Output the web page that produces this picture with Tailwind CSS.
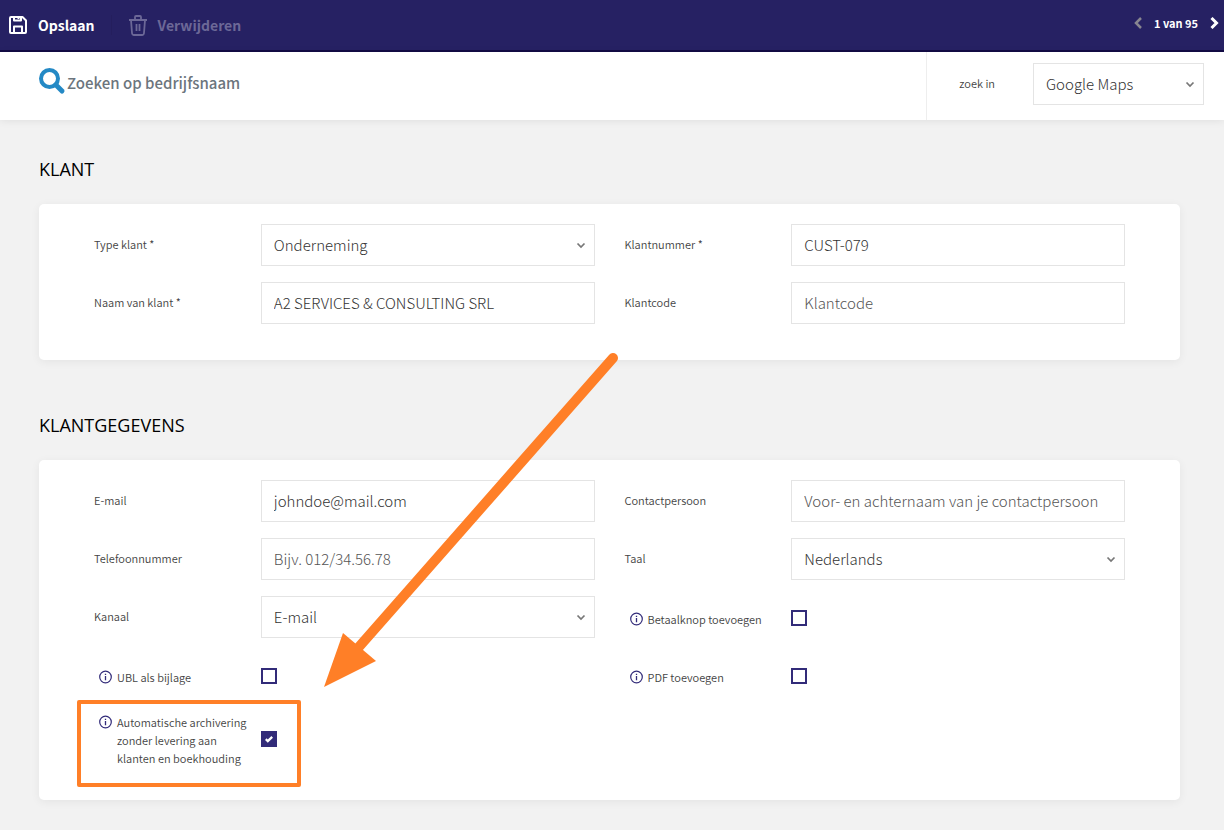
<!DOCTYPE html>
<html lang="nl">
<head>
    <meta charset="UTF-8">
    <meta name="viewport" content="width=device-width, initial-scale=1.0">
    <title>Klant bewerken</title>
    <script src="https://cdn.jsdelivr.net/npm/@tailwindcss/browser@4"></script>
</head>
<body class="min-h-screen bg-[#f2f2f2] font-['Noto_Sans_CJK_SC','Open_Sans',sans-serif] font-light text-[#444]">

    <!-- Toolbar -->
    <header class="flex h-13 items-center justify-between border-b-2 border-[#120b45] bg-[#262163] pl-2 pr-1 text-white">
        <div class="flex items-center">
            <button type="button" class="flex items-center gap-2.5 border-r border-[#241e5d] pr-4 text-[14px] leading-5 font-bold">
                <svg class="h-5 w-5" viewBox="0 0 20 20" fill="none" stroke="currentColor" stroke-width="2" stroke-linejoin="round" aria-hidden="true"><path d="M3 2h11.500L18 5.500V17a1 1 0 0 1-1 1H3a1 1 0 0 1-1-1V3a1 1 0 0 1 1-1z"/><path d="M6 2v3.500h7V2M6 18v-6.500h8V18"/><path d="M10.500 2.500v1.500"/></svg>
                Opslaan
            </button>
            <button type="button" disabled class="ml-3.5 flex items-center gap-2 text-[14px] leading-5 font-bold text-[#6c6897]">
                <svg class="h-6 w-6" viewBox="0 0 24 24" fill="none" stroke="currentColor" stroke-width="2" aria-hidden="true"><path d="M3 7h18M9 7V4q0-1 1-1h4q1 0 1 1v3M5 7l1 13q.2 2 2 2h8q1.800 0 2-2l1-13M10.500 11v7M13.500 11v7" stroke-width="1.800"/></svg>
                Verwijderen
            </button>
        </div>
        <nav class="flex items-center gap-2.5 pb-1 text-[11px] leading-4 font-bold" aria-label="Bladeren">
            <button type="button" aria-label="Vorige" class="text-[#888690]">
                <svg class="h-3 w-3" viewBox="0 0 12 12" fill="none" stroke="currentColor" stroke-width="2.500" aria-hidden="true"><path d="M9 1 4 6l5 5"/></svg>
            </button>
            <span>1 van 95</span>
            <button type="button" aria-label="Volgende">
                <svg class="h-3 w-3" viewBox="0 0 12 12" fill="none" stroke="currentColor" stroke-width="3" aria-hidden="true"><path d="m3.500 1 5 5-5 5"/></svg>
            </button>
        </nav>
    </header>

    <!-- Search bar -->
    <div class="flex h-17 bg-white shadow-[0_1px_8px_rgba(0,0,0,0.08)]">
        <div class="flex flex-1 items-center pb-1 pl-[38px]">
            <svg class="mb-1.5 h-7 w-7 shrink-0" viewBox="0 0 28 28" fill="none" stroke="#2489c5" stroke-width="4" aria-hidden="true"><circle cx="11.500" cy="11.500" r="8.500"/><path d="m18 18 6 6" stroke-width="5" stroke-linecap="round"/></svg>
            <input type="text" aria-label="Zoeken op bedrijfsnaam" placeholder="Zoeken op bedrijfsnaam" class="w-full pb-0.5 pl-px text-[15px] leading-6 font-medium outline-none placeholder:text-[#6c757d]">
        </div>
        <div class="flex items-center border-l border-[#eee] pr-5 pb-1 pl-8">
            <label for="zoekIn" class="mr-[38px] pb-0.5 text-[11px] leading-4 font-[350]">zoek in</label>
            <div class="relative w-[171px]">
                <select id="zoekIn" class="h-[42px] w-full appearance-none border border-[#e4e4e4] bg-white px-3 text-[15px] leading-6 text-[#333]">
                    <option>Google Maps</option>
                </select>
                <svg class="pointer-events-none absolute top-1/2 right-2 h-2 w-3 -translate-y-1/2" viewBox="0 0 12 8" fill="none" stroke="#777" stroke-width="1.700" aria-hidden="true"><path d="m2.500 2.500 3.500 3.500 3.500-3.500"/></svg>
            </div>
        </div>
    </div>

    <main class="relative pr-11 pb-7 pl-[39px]">
        <section class="pt-[35px]">
            <h2 class="font-['Open_Sans',sans-serif] text-[18px] leading-7 font-normal text-black">KLANT</h2>
            <div class="mt-[21px] grid grid-cols-2 gap-x-[30px] gap-y-4 rounded-[5px] bg-white px-[55px] pt-5 pb-9 shadow-[0_2px_10px_rgba(0,0,0,0.06)]">
                <div class="grid grid-cols-3 items-center">
                    <label for="type" class="pb-0.5 text-[11px] leading-4 font-[350]">Type klant *</label>
                    <div class="relative col-span-2">
                        <select id="type" class="h-[42px] w-full appearance-none border border-[#e4e4e4] bg-white px-3 text-[15px] leading-6 text-[#333]">
                            <option>Onderneming</option>
                        </select>
                        <svg class="pointer-events-none absolute top-1/2 right-2 h-2 w-3 -translate-y-1/2" viewBox="0 0 12 8" fill="none" stroke="#777" stroke-width="1.700" aria-hidden="true"><path d="m2.500 2.500 3.500 3.500 3.500-3.500"/></svg>
                    </div>
                </div>
                <div class="grid grid-cols-3 items-center">
                    <label for="nummer" class="pb-0.5 text-[11px] leading-4 font-[350]">Klantnummer *</label>
                    <input id="nummer" type="text" value="CUST-079" class="col-span-2 h-[42px] border border-[#e4e4e4] px-3 pb-0.5 text-[15px] leading-6 text-[#333]">
                </div>
                <div class="grid grid-cols-3 items-center">
                    <label for="naam" class="pb-0.5 text-[11px] leading-4 font-[350]">Naam van klant *</label>
                    <input id="naam" type="text" value="A2 SERVICES &amp; CONSULTING SRL" class="col-span-2 h-[42px] border border-[#e4e4e4] px-3 pb-0.5 text-[15px] leading-6 text-[#333]">
                </div>
                <div class="grid grid-cols-3 items-center">
                    <label for="code" class="pb-0.5 text-[11px] leading-4 font-[350]">Klantcode</label>
                    <input id="code" type="text" placeholder="Klantcode" class="col-span-2 h-[42px] border border-[#e4e4e4] px-3 pb-0.5 text-[15px] leading-6 text-[#333] placeholder:text-[#555]">
                </div>
            </div>
        </section>

        <section class="pt-[51px]">
            <h2 class="font-['Open_Sans',sans-serif] text-[18px] leading-7 font-normal text-black">KLANTGEGEVENS</h2>
            <div class="mt-[21px] grid grid-cols-2 gap-x-[30px] gap-y-4 rounded-[5px] bg-white px-[55px] pt-5 pb-8 shadow-[0_2px_10px_rgba(0,0,0,0.06)]">
                <div class="grid grid-cols-3 items-center">
                    <label for="email" class="pb-0.5 text-[11px] leading-4 font-[350]">E-mail</label>
                    <input id="email" type="email" value="johndoe@mail.com" class="col-span-2 h-[42px] border border-[#e4e4e4] px-3 pb-0.5 text-[15px] leading-6 text-[#333]">
                </div>
                <div class="grid grid-cols-3 items-center">
                    <label for="contact" class="pb-0.5 text-[11px] leading-4 font-[350]">Contactpersoon</label>
                    <input id="contact" type="text" placeholder="Voor- en achternaam van je contactpersoon" class="col-span-2 h-[42px] border border-[#e4e4e4] px-3 pb-0.5 text-[15px] leading-6 text-[#333] placeholder:text-[#555]">
                </div>
                <div class="grid grid-cols-3 items-center">
                    <label for="telefoon" class="pb-0.5 text-[11px] leading-4 font-[350]">Telefoonnummer</label>
                    <input id="telefoon" type="tel" placeholder="Bijv. 012/34.56.78" class="col-span-2 h-[42px] border border-[#e4e4e4] px-3 pb-0.5 text-[15px] leading-6 text-[#333] placeholder:text-[#555]">
                </div>
                <div class="grid grid-cols-3 items-center">
                    <label for="taal" class="pb-0.5 text-[11px] leading-4 font-[350]">Taal</label>
                    <div class="relative col-span-2">
                        <select id="taal" class="h-[42px] w-full appearance-none border border-[#e4e4e4] bg-white px-3 text-[15px] leading-6 text-[#333]">
                            <option>Nederlands</option>
                        </select>
                        <svg class="pointer-events-none absolute top-1/2 right-2 h-2 w-3 -translate-y-1/2" viewBox="0 0 12 8" fill="none" stroke="#777" stroke-width="1.700" aria-hidden="true"><path d="m2.500 2.500 3.500 3.500 3.500-3.500"/></svg>
                    </div>
                </div>
                <div class="grid grid-cols-3 items-center">
                    <label for="kanaal" class="pb-0.5 text-[11px] leading-4 font-[350]">Kanaal</label>
                    <div class="relative col-span-2">
                        <select id="kanaal" class="h-[42px] w-full appearance-none border border-[#e4e4e4] bg-white px-3 text-[15px] leading-6 text-[#333]">
                            <option>E-mail</option>
                        </select>
                        <svg class="pointer-events-none absolute top-1/2 right-2 h-2 w-3 -translate-y-1/2" viewBox="0 0 12 8" fill="none" stroke="#777" stroke-width="1.700" aria-hidden="true"><path d="m2.500 2.500 3.500 3.500 3.500-3.500"/></svg>
                    </div>
                </div>

                <!-- Checkboxes -->
                <div class="grid min-h-[42px] grid-cols-3 items-center pt-0.5">
                    <label for="betaalknop" class="flex gap-[5px] pt-0.5 pl-1 text-[11px] leading-[18px] font-[350]">
                        <svg class="mt-0.5 h-[14px] w-[14px] shrink-0" viewBox="0 0 14 14" fill="none" stroke="#322b79" aria-hidden="true"><circle cx="7.500" cy="7" r="5.800" stroke-width="1.200"/><path d="M7.500 6v4.200M7.500 3.700v1.300" stroke-width="1.300"/></svg>
                        Betaalknop toevoegen
                    </label>
                    <input id="betaalknop" type="checkbox" class="h-4 w-4 appearance-none border-2 border-[#322b79]">
                </div>
                <div class="grid min-h-[42px] grid-cols-3 items-center pt-0.5">
                    <label for="ubl" class="flex gap-[5px] pt-0.5 pl-1 text-[11px] leading-[18px] font-[350]">
                        <svg class="mt-0.5 h-[14px] w-[14px] shrink-0" viewBox="0 0 14 14" fill="none" stroke="#322b79" aria-hidden="true"><circle cx="7.500" cy="7" r="5.800" stroke-width="1.200"/><path d="M7.500 6v4.200M7.500 3.700v1.300" stroke-width="1.300"/></svg>
                        UBL als bijlage
                    </label>
                    <input id="ubl" type="checkbox" class="h-4 w-4 appearance-none border-2 border-[#322b79]">
                </div>
                <div class="grid min-h-[42px] grid-cols-3 items-center pt-0.5">
                    <label for="pdf" class="flex gap-[5px] pt-0.5 pl-1 text-[11px] leading-[18px] font-[350]">
                        <svg class="mt-0.5 h-[14px] w-[14px] shrink-0" viewBox="0 0 14 14" fill="none" stroke="#322b79" aria-hidden="true"><circle cx="7.500" cy="7" r="5.800" stroke-width="1.200"/><path d="M7.500 6v4.200M7.500 3.700v1.300" stroke-width="1.300"/></svg>
                        PDF toevoegen
                    </label>
                    <input id="pdf" type="checkbox" class="h-4 w-4 appearance-none border-2 border-[#322b79]">
                </div>
                <div class="relative grid grid-cols-3 items-center">
                    <label for="archief" class="flex gap-[5px] pt-px pb-px pl-1 text-[11px] leading-[18px] font-[350]">
                        <svg class="mt-0.5 h-[14px] w-[14px] shrink-0" viewBox="0 0 14 14" fill="none" stroke="#322b79" aria-hidden="true"><circle cx="7.500" cy="7" r="5.800" stroke-width="1.200"/><path d="M7.500 6v4.200M7.500 3.700v1.300" stroke-width="1.300"/></svg>
                        <span>Automatische archivering<br>zonder levering aan<br>klanten en boekhouding</span>
                    </label>
                    <div class="relative mb-0.5 h-4 w-4">
                        <input id="archief" type="checkbox" checked class="block h-4 w-4 appearance-none bg-[#322b79]">
                        <svg class="pointer-events-none absolute inset-0 h-4 w-4" viewBox="0 0 16 16" fill="none" stroke="#fff" stroke-width="2.300" aria-hidden="true"><path d="m4.800 8.200 2 1.900 4.400-4.200"/></svg>
                    </div>
                    <div class="pointer-events-none absolute -top-3 -left-[17px] h-[87px] w-[224px] rounded-xs border-4 border-[#ff7f27]"></div>
                </div>
            </div>
        </section>

        <!-- Arrow pointing at the archive option -->
        <svg class="pointer-events-none absolute top-[232px] left-[324px] h-[336px] w-[296px]" viewBox="0 0 296 336" aria-hidden="true">
            <path d="M289 6 34 296" stroke="#ff7f27" stroke-width="10" stroke-linecap="round"/>
            <path d="M0 335 19 281 52 309z" fill="#ff7f27"/>
        </svg>
    </main>
</body>
</html>
